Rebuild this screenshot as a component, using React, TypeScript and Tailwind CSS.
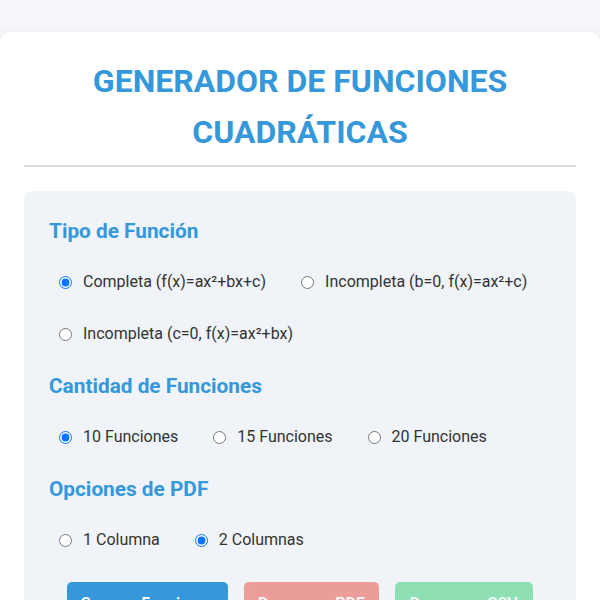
import React from "react";

const font = { fontFamily: "Roboto, 'Liberation Sans', sans-serif" };

function Radio({ name, label, checked }: { name: string; label: string; checked?: boolean }) {
  return (
    <label className="flex items-center h-[42px] px-[10px] gap-[11px] text-[16px] leading-[24px] text-[#333] cursor-pointer">
      <input type="radio" name={name} defaultChecked={checked} className="w-[13px] h-[13px] m-0" />
      <span>{label}</span>
    </label>
  );
}

function Group({ title, children, last }: { title: string; children: React.ReactNode; last?: boolean }) {
  return (
    <div className={last ? "" : "mb-[16px]"}>
      <h3 className="text-[20.8px] leading-[30px] font-bold text-[#3498db] mb-[15px]">{title}</h3>
      <div className="flex flex-wrap gap-x-[15px] gap-y-[10px]">{children}</div>
    </div>
  );
}

export default function App() {
  return (
    <div className="min-h-screen bg-[#f5f7fa] pt-[32px]" style={font}>
      <div className="bg-white rounded-[10px] shadow-[0_0_10px_rgba(0,0,0,0.06)] px-6 pt-6 pb-6">
        <h1 className="text-[32px] leading-[1.6] font-bold text-center text-[#3498db] pb-[7px] border-b-2 border-[#dcdcdc] mb-[24px]">
          GENERADOR DE FUNCIONES CUADRÁTICAS
        </h1>
        <div className="bg-[#f0f3f8] rounded-[8px] p-[25px]">
          <Group title="Tipo de Función">
            <Radio name="tipo" label="Completa (f(x)=ax²+bx+c)" checked />
            <Radio name="tipo" label="Incompleta (b=0, f(x)=ax²+c)" />
            <Radio name="tipo" label="Incompleta (c=0, f(x)=ax²+bx)" />
          </Group>
          <Group title="Cantidad de Funciones">
            <Radio name="cant" label="10 Funciones" checked />
            <Radio name="cant" label="15 Funciones" />
            <Radio name="cant" label="20 Funciones" />
          </Group>
          <Group title="Opciones de PDF" last>
            <Radio name="cols" label="1 Columna" />
            <Radio name="cols" label="2 Columnas" checked />
          </Group>
          <div className="flex justify-center gap-4 mt-[21px]">
            <button className="bg-[#3498db] text-white text-[16px] font-semibold rounded-[5px] px-[13px] py-3 leading-[20px]">
              Generar Funciones
            </button>
            <button disabled className="bg-[#e74c3c] text-white text-[16px] font-semibold rounded-[5px] px-[14px] py-3 leading-[20px] opacity-50">
              Descargar PDF
            </button>
            <button disabled className="bg-[#2ecc71] text-white text-[16px] font-semibold rounded-[5px] px-[15px] py-3 leading-[20px] opacity-50">
              Descargar CSV
            </button>
          </div>
        </div>
      </div>
    </div>
  );
}
